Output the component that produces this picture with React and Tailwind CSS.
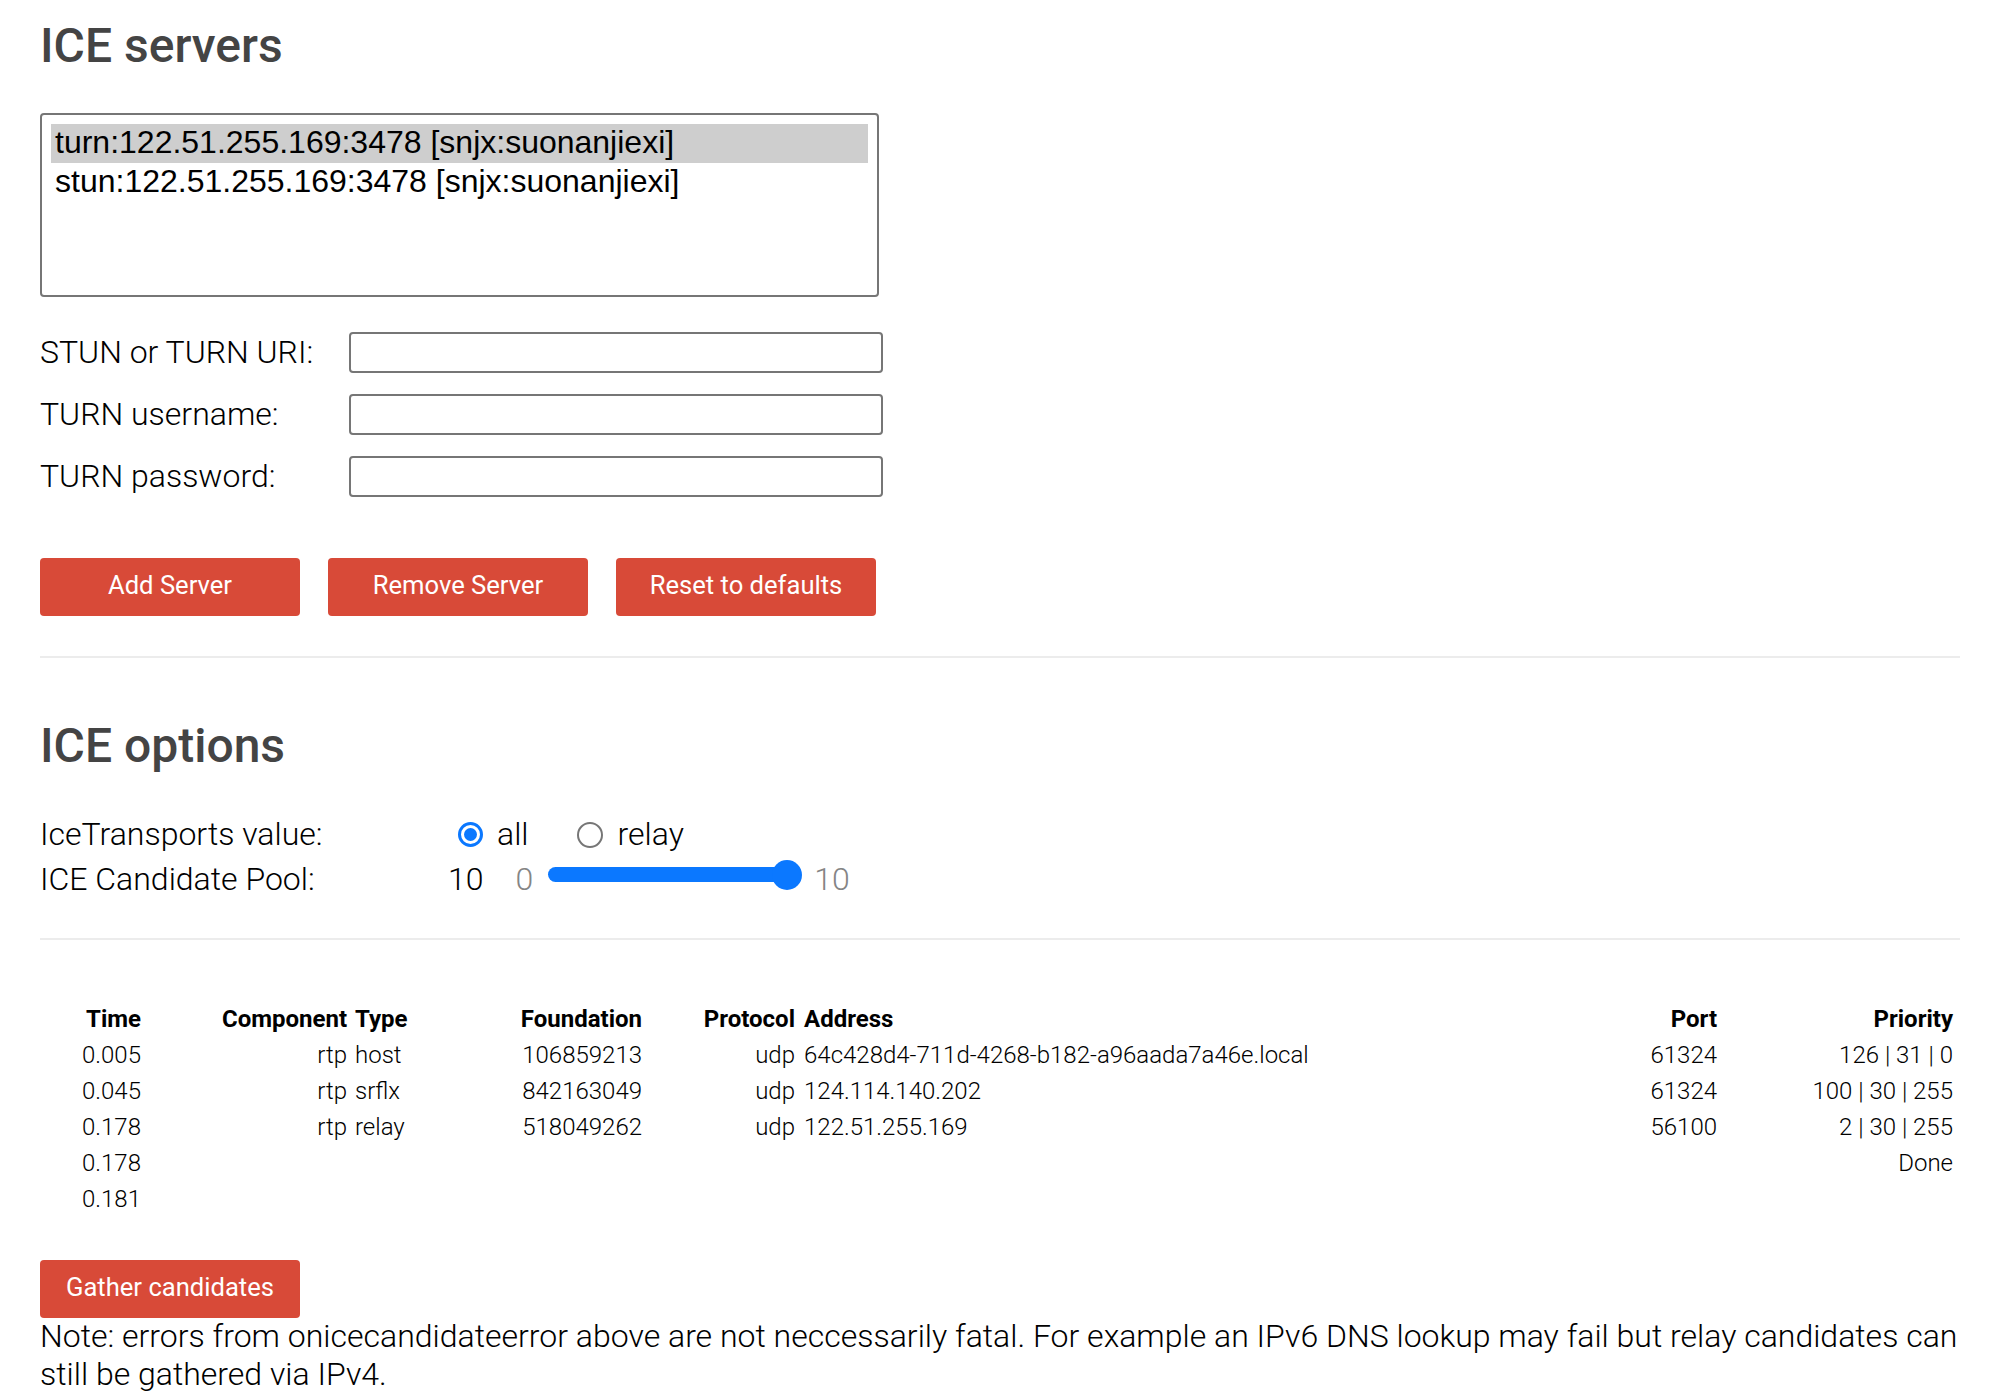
export default function App() {
  const rows = [
    ["0.005", "rtp", "host", "106859213", "udp", "64c428d4-711d-4268-b182-a96aada7a46e.local", "61324", "126 | 31 | 0"],
    ["0.045", "rtp", "srflx", "842163049", "udp", "124.114.140.202", "61324", "100 | 30 | 255"],
    ["0.178", "rtp", "relay", "518049262", "udp", "122.51.255.169", "56100", "2 | 30 | 255"],
    ["0.178", "", "", "", "", "", "", "Done"],
    ["0.181", "", "", "", "", "", "", ""],
  ];
  const headers = ["Time", "Component", "Type", "Foundation", "Protocol", "Address", "Port", "Priority"];
  const align = ["text-right", "text-right", "text-left pl-[8px]", "text-right", "text-right", "text-left pl-[9px]", "text-right", "text-right"];

  return (
    <div className="w-[2006px] min-h-[1400px] bg-white pl-[40px] pr-[46px] font-[Roboto,sans-serif] font-light text-black">
      <h2 className="pt-[18px] text-[48px] leading-[56px] font-medium text-[#444]">ICE servers</h2>

      <div className="mt-[39px] w-[839px] h-[184px] border-2 border-[#767676] rounded-[4px] p-[9px] font-['Liberation_Sans',Arial,sans-serif] font-normal text-[32px]">
        <div className="bg-[#cecece] px-[4px] leading-[37px] pb-[2px] whitespace-nowrap">turn:122.51.255.169:3478 [snjx:suonanjiexi]</div>
        <div className="px-[4px] leading-[37px] pb-[2px] whitespace-nowrap">stun:122.51.255.169:3478 [snjx:suonanjiexi]</div>
      </div>

      <div className="mt-[35px] flex flex-col gap-[21px]">
        {["STUN or TURN URI:", "TURN username:", "TURN password:"].map((l) => (
          <div key={l} className="flex items-center h-[41px]">
            <div className="w-[309px] text-[32px] leading-[37.5px]">{l}</div>
            <div className="w-[534px] h-[41px] border-2 border-[#767676] rounded-[4px] bg-white" />
          </div>
        ))}
      </div>

      <div className="mt-[61px] flex gap-[28px]">
        {["Add Server", "Remove Server", "Reset to defaults"].map((b) => (
          <button key={b} className="w-[260px] h-[58px] pb-[4px] bg-[#d84a38] text-white text-[25.6px] font-normal rounded-[4px] flex items-center justify-center">
            {b}
          </button>
        ))}
      </div>

      <div className="mt-[40px] h-[2px] bg-[#ececec]" />

      <h2 className="mt-[60px] text-[48px] leading-[56px] font-medium text-[#444]">ICE options</h2>

      <div className="mt-[38px] text-[32px]">
        <div className="flex items-center h-[45px]">
          <div className="w-[418px] leading-[37.5px]">IceTransports value:</div>
          <div className="w-[25px] h-[25px] rounded-full border-[3px] border-[#0b78ff] flex items-center justify-center">
            <div className="w-[13px] h-[13px] rounded-full bg-[#0b78ff]" />
          </div>
          <div className="ml-[14px] leading-[37.5px]">all</div>
          <div className="ml-[48px] w-[26px] h-[26px] rounded-full border-2 border-[#767676]" />
          <div className="ml-[15px] leading-[37.5px]">relay</div>
        </div>
        <div className="flex items-center h-[45px]">
          <div className="w-[408px] leading-[37.5px]">ICE Candidate Pool:</div>
          <div className="leading-[37.5px]">10</div>
          <div className="ml-[32px] leading-[37.5px] text-[#858585]">0</div>
          <div className="ml-[15px] mb-[10px] relative w-[254px] h-[30px] flex items-center">
            <div className="w-[240px] h-[15px] rounded-full bg-[#0b78ff]" />
            <div className="absolute right-0 top-0 w-[30px] h-[30px] rounded-full bg-[#0b78ff]" />
          </div>
          <div className="ml-[12px] leading-[37.5px] text-[#858585]">10</div>
        </div>
      </div>

      <div className="mt-[36px] h-[2px] bg-[#ececec]" />

      <div className="mt-[61px] grid grid-cols-[101px_206px_73px_222px_153px_705px_217px_236px] text-[24px] leading-[36px]">
        {headers.map((h, i) => (
          <div key={h} className={`font-bold ${align[i]}`}>{h}</div>
        ))}
        {rows.map((r, ri) =>
          r.map((c, ci) => (
            <div key={ri + "-" + ci} className={`whitespace-nowrap ${align[ci]}`}>{c}</div>
          ))
        )}
      </div>

      <button className="mt-[43px] w-[260px] h-[58px] pb-[4px] bg-[#d84a38] text-white text-[25.6px] font-normal rounded-[4px] flex items-center justify-center">
        Gather candidates
      </button>
      <p className="text-[32px] leading-[37.5px]">
        Note: errors from onicecandidateerror above are not neccessarily fatal. For example an IPv6 DNS lookup may fail but relay candidates can still be gathered via IPv4.
      </p>
    </div>
  );
}
